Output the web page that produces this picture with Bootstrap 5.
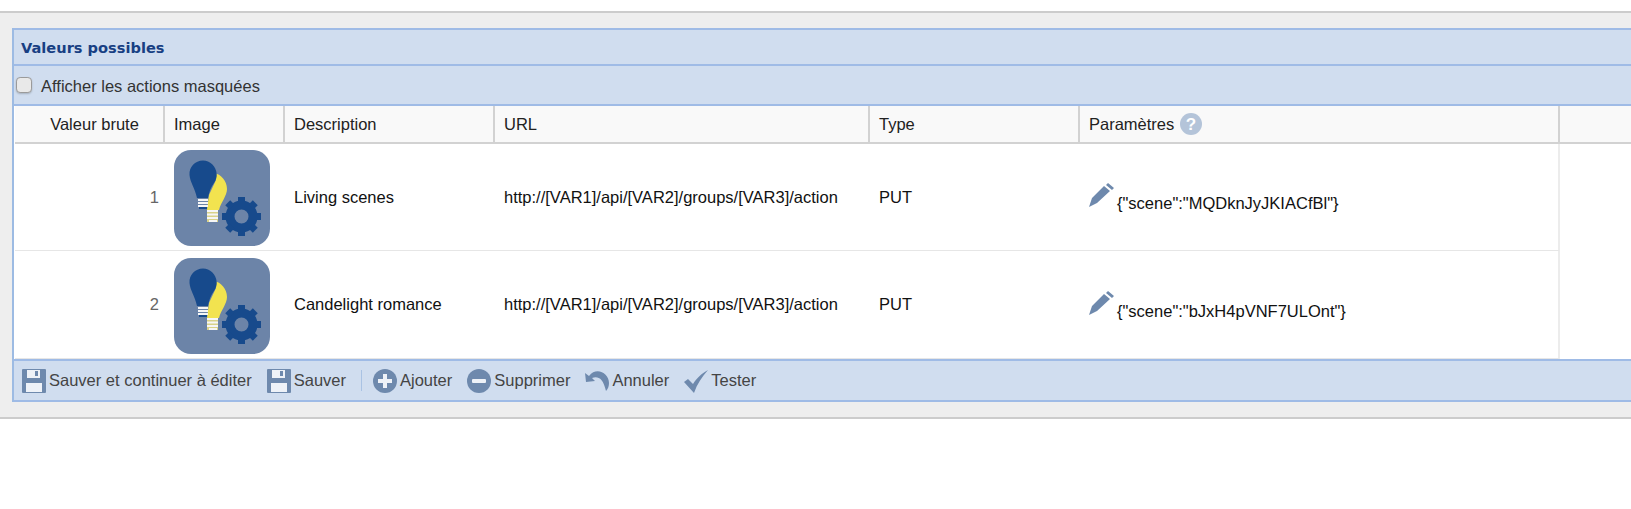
<!DOCTYPE html>
<html lang="fr">
<head>
<meta charset="utf-8">
<title>Valeurs possibles</title>
<link href="https://cdn.jsdelivr.net/npm/bootstrap@5.3.0/dist/css/bootstrap.min.css" rel="stylesheet">
<style>
html,body{height:509px;overflow:hidden;background:#fff;font-family:"Liberation Sans",Arial,sans-serif;font-size:16.5px;color:#000}
.page-band{margin-top:11px;height:408px;background:#eeeeee;border-top:2px solid #cccccc;border-bottom:2px solid #cccccc;padding:15px 0 0 12px}
.edit-box{border-left:2px solid #9dbbe3;height:374px;display:flex;flex-direction:column}
.title-band{height:38px;background:#d0ddef;border-top:2px solid #9fbbe6;border-bottom:2px solid #9fbbe6;padding:2px 0 0 7px;display:flex;align-items:center;font-family:"DejaVu Sans",sans-serif;font-weight:700;font-size:14.6px;color:#183f83}
.filter-band{height:40px;background:#d0ddef;border-bottom:2px solid #9fbbe6;display:flex;align-items:center;padding-left:2px;color:#333;font-size:16.5px}
.filter-band input{width:16px;height:16px;margin:0 9px 0 0;border:1px solid #9a9a9a;border-radius:3px;background:#e9e9e9;box-shadow:0 1px 2px #0003}
.filter-label{margin-top:2px}
.grid-wrap{background:#fff;flex:1 1 auto;padding-left:1px}
.values{table-layout:fixed;width:1618px;margin:0;border-collapse:separate;border-spacing:0;--bs-table-bg:transparent;font-size:16.5px}
.values thead th{height:38px;background:#f9f9f9;font-weight:400;color:#222;padding:0 0 0 9px;vertical-align:middle;border-right:2px solid #d2d2d2;border-bottom:2px solid #d2d2d2}
.values thead th:first-child{text-align:center;padding:0 0 0 11px}
.values tbody td{height:107px;padding:0 0 0 9px;vertical-align:middle;border-bottom:1px solid #e6e6e6;color:#111}
.values tbody tr:last-child td{height:108px}
.values tbody td.rawval{text-align:right;padding:0 6px 0 0;color:#666}
.values tbody td.params{border-right:2px solid #ececec}
.values tbody td.filler{border:0}
.values tbody td.thumb-cell{padding-top:2px}
.values tbody tr:last-child td.thumb-cell{padding-top:3px}
.values thead th:last-child{border-right:0}
.thumb{display:block;width:96px;height:96px}
.pencil{width:26px;height:26px;vertical-align:-3px}
.param-text{position:relative;top:4px;margin-left:2px}
.help-ic{width:22px;height:22px;vertical-align:-5px;margin-left:1px}
.action-bar{height:43px;background:#d0ddef;border-top:2px solid #9fbbe6;border-bottom:2px solid #9fbbe6;display:flex;align-items:center;padding-left:8px;color:#444;font-size:16.5px}
.act{display:flex;align-items:center;gap:3px;margin-right:15px}
.act svg{width:24px;height:24px;flex:none}
.act-sep{width:1px;height:21px;background:#a9c2e3;margin:0 11px 0 0}
</style>
</head>
<body>
<div class="page-band">
  <div class="edit-box">
    <div class="title-band">Valeurs possibles</div>
    <div class="filter-band"><input type="checkbox" class="form-check-input mt-0"><span class="filter-label">Afficher les actions masquées</span></div>
    <div class="grid-wrap">
      <table class="table values">
        <colgroup><col style="width:150px"><col style="width:120px"><col style="width:210px"><col style="width:375px"><col style="width:210px"><col style="width:480px"><col></colgroup>
        <thead><tr>
          <th>Valeur brute</th><th>Image</th><th>Description</th><th>URL</th><th>Type</th>
          <th>Paramètres <svg class="help-ic" viewBox="0 0 22 22"><circle cx="11" cy="11" r="11" fill="#b4c4d9"/><text x="11" y="17" text-anchor="middle" font-family="Liberation Sans" font-weight="700" font-size="17" fill="#fff">?</text></svg></th><th></th>
        </tr></thead>
        <tbody>
          <tr>
            <td class="rawval">1</td>
            <td class="thumb-cell"><svg class="thumb" viewBox="0 0 96 96"><use href="#bulb-tile"/></svg></td>
            <td>Living scenes</td>
            <td>http://[VAR1]/api/[VAR2]/groups/[VAR3]/action</td>
            <td>PUT</td>
            <td class="params"><svg class="pencil" viewBox="0 0 26 26"><use href="#pen"/></svg><span class="param-text">{"scene":"MQDknJyJKIACfBl"}</span></td>
            <td class="filler"></td>
          </tr>
          <tr>
            <td class="rawval">2</td>
            <td class="thumb-cell"><svg class="thumb" viewBox="0 0 96 96"><use href="#bulb-tile"/></svg></td>
            <td>Candelight romance</td>
            <td>http://[VAR1]/api/[VAR2]/groups/[VAR3]/action</td>
            <td>PUT</td>
            <td class="params"><svg class="pencil" viewBox="0 0 26 26"><use href="#pen"/></svg><span class="param-text">{"scene":"bJxH4pVNF7ULOnt"}</span></td>
            <td class="filler"></td>
          </tr>
        </tbody>
      </table>
    </div>
    <div class="action-bar">
      <div class="act"><svg viewBox="0 0 24 24"><use href="#disk"/></svg><span>Sauver et continuer à éditer</span></div>
      <div class="act"><svg viewBox="0 0 24 24"><use href="#disk"/></svg><span>Sauver</span></div>
      <div class="act-sep"></div>
      <div class="act"><svg viewBox="0 0 24 24"><circle cx="12" cy="12" r="12" fill="#6e89ad"/><path d="M10 5h4v5h5v4h-5v5h-4v-5H5v-4h5z" fill="#eef2f8"/></svg><span>Ajouter</span></div>
      <div class="act"><svg viewBox="0 0 24 24"><circle cx="12" cy="12" r="12" fill="#6e89ad"/><rect x="5" y="10" width="14" height="4" rx="1" fill="#eef2f8"/></svg><span>Supprimer</span></div>
      <div class="act"><svg viewBox="0 0 24 24"><path d="M0 4l1 9 9-1-3-3c6-2 11 0 14 13 2-2 3-5 3-8C24 5 12-3 4 7z" fill="#6e89ad"/></svg><span>Annuler</span></div>
      <div class="act"><svg viewBox="0 0 24 24"><path d="M0 13l4-3 5 5C13 9 17 5 24 1 18 8 13 15 10 24z" fill="#6e89ad"/></svg><span>Tester</span></div>
    </div>
  </div>
</div>
<svg width="0" height="0" class="d-block" aria-hidden="true">
  <defs>
    <g id="disk"><path d="M1 0h22a1 1 0 0 1 1 1v22a1 1 0 0 1-1 1H1a1 1 0 0 1-1-1V1a1 1 0 0 1 1-1z" fill="#6e89ad"/><rect x="5" y="1" width="13" height="8" fill="#eef2f8"/><rect x="13" y="2" width="3" height="5" fill="#6e89ad"/><rect x="4" y="14" width="16" height="9" fill="#eef2f8"/></g>
    <path id="pen" d="M19 1l6 5-2 2-6-5zM15 4l6 5L8 21 0 25l3-9z" fill="#6e89ad"/>
    <rect id="gear-tooth" x="-3.500" y="-19.500" width="7" height="6" fill="#174a8c"/>
    <g id="bulb-tile">
      <rect width="96" height="96" rx="17" fill="#6c84a8"/>
      <path d="M40 23C47 24 53 31 53 39 53 46 47 52 45 60H33L35 45 42 30z" fill="#f2e34f"/>
      <rect x="33" y="60" width="11" height="12" fill="#d8d28a"/>
      <g fill="#f6f6f6"><rect x="33" y="60" width="11" height="2"/><rect x="33" y="63.500" width="11" height="2"/><rect x="33" y="67" width="11" height="2"/><rect x="35" y="70" width="8" height="2"/></g>
      <path d="M29 10.500C21 10.500 15 17 15.500 25 16 32 21 38 23 48H34C35 42 37 37 40 33 42 30 43 27 42.700 24 42 16 36 10.500 29 10.500z" fill="#174a8c"/>
      <g fill="#f6f6f6"><rect x="24" y="49" width="10" height="2"/><rect x="24" y="52" width="10" height="2"/><rect x="24" y="55" width="10" height="2"/></g>
      <rect x="25" y="57" width="8" height="2" fill="#174a8c"/>
      <g transform="translate(67.500 66.500)">
        <circle r="11.500" fill="none" stroke="#174a8c" stroke-width="9"/>
        <use href="#gear-tooth"/><use href="#gear-tooth" transform="rotate(45)"/><use href="#gear-tooth" transform="rotate(90)"/><use href="#gear-tooth" transform="rotate(135)"/><use href="#gear-tooth" transform="rotate(180)"/><use href="#gear-tooth" transform="rotate(225)"/><use href="#gear-tooth" transform="rotate(270)"/><use href="#gear-tooth" transform="rotate(315)"/>
      </g>
    </g>
  </defs>
</svg>
<script src="https://cdn.jsdelivr.net/npm/bootstrap@5.3.0/dist/js/bootstrap.bundle.min.js"></script>
</body>
</html>
